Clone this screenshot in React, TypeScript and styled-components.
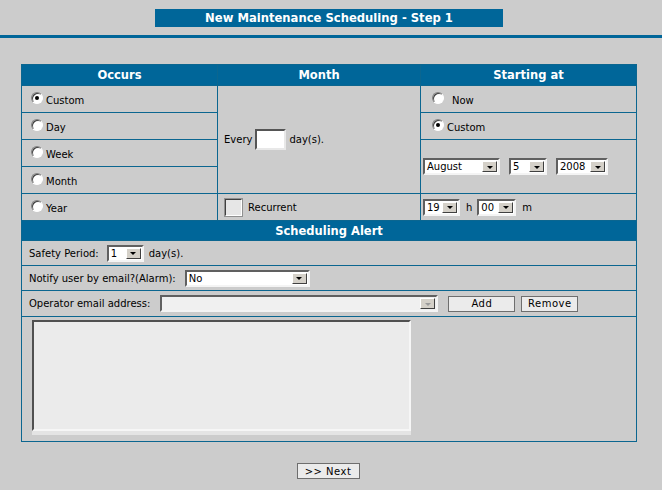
import styled, { createGlobalStyle } from "styled-components";

const GlobalStyle = createGlobalStyle`
    html, body {
        margin: 0;
        padding: 0;
        background: #cccccc;
        font-family: "DejaVu Sans", Verdana, sans-serif;
        font-size: 10px;
        color: #000;
    }
`

const BLUE = "#006699";
const LINE = "#0b6690";

interface SelectProps {
    width: number;
    value: string;
    disabled?: boolean;
}

function Select({ width, value, disabled }: SelectProps) {
    return (
        <SelectBox $w={width} $disabled={disabled}>
            <SelectValue>{value}</SelectValue>
            <ArrowButton>
                <Triangle $disabled={disabled} />
            </ArrowButton>
        </SelectBox>
    )
}

function Radio({ checked, label, gap }: { checked?: boolean; label: string; gap?: number }) {
    return (
        <RadioLabel $gap={gap ?? 3}>
            <RadioCircle>{checked && <RadioDot />}</RadioCircle>
            <span>{label}</span>
        </RadioLabel>
    )
}

const occurs = ["Custom", "Day", "Week", "Month", "Year"];

function App() {
    return (
        <>
            <GlobalStyle />
            <TitleWrap>
                <TitleBar>New Maintenance Scheduling - Step 1</TitleBar>
            </TitleWrap>
            <Rule />
            <FormTable>
                <colgroup>
                    <col style={{ width: 196 }} />
                    <col style={{ width: 203 }} />
                    <col style={{ width: 216 }} />
                </colgroup>
                <tbody>
                    <tr>
                        <HeadCell>Occurs</HeadCell>
                        <HeadCell>Month</HeadCell>
                        <HeadCell>Starting at</HeadCell>
                    </tr>
                    <tr>
                        <OptionCell><Radio checked label={occurs[0]} /></OptionCell>
                        <MonthCell rowSpan={4}>
                            <Inline $gap={3}>
                                <span>Every</span>
                                <DayInput />
                                <span>day(s).</span>
                            </Inline>
                        </MonthCell>
                        <StartCell><Radio label="Now" gap={8} /></StartCell>
                    </tr>
                    <tr>
                        <OptionCell><Radio label={occurs[1]} /></OptionCell>
                        <StartCell><Radio checked label="Custom" /></StartCell>
                    </tr>
                    <tr>
                        <OptionCell><Radio label={occurs[2]} /></OptionCell>
                        <DateCell rowSpan={2}>
                            <Inline $gap={9}>
                                <Select width={77} value="August" />
                                <Select width={38} value="5" />
                                <Select width={52} value="2008" />
                            </Inline>
                        </DateCell>
                    </tr>
                    <tr>
                        <OptionCell><Radio label={occurs[3]} /></OptionCell>
                    </tr>
                    <tr>
                        <OptionCell><Radio label={occurs[4]} /></OptionCell>
                        <MonthCell>
                            <Inline $gap={5}>
                                <CheckBox />
                                <span>Recurrent</span>
                            </Inline>
                        </MonthCell>
                        <DateCell>
                            <Inline $gap={0}>
                                <Select width={37} value="19" />
                                <TimeUnit>h</TimeUnit>
                                <Select width={39} value="00" />
                                <TimeUnit>m</TimeUnit>
                            </Inline>
                        </DateCell>
                    </tr>
                    <tr>
                        <SectionHead colSpan={3}>Scheduling Alert</SectionHead>
                    </tr>
                    <tr>
                        <AlertCell colSpan={3} $h={24}>
                            <Inline $gap={0}>
                                <span>Safety Period:</span>
                                <Spacer $w={8} />
                                <Select width={37} value="1" />
                                <Spacer $w={5} />
                                <span>day(s).</span>
                            </Inline>
                        </AlertCell>
                    </tr>
                    <tr>
                        <AlertCell colSpan={3} $h={24}>
                            <Inline $gap={9}>
                                <span>Notify user by email?(Alarm):</span>
                                <Select width={125} value="No" />
                            </Inline>
                        </AlertCell>
                    </tr>
                    <tr>
                        <AlertCell colSpan={3} $h={25}>
                            <Inline $gap={0}>
                                <span>Operator email address:</span>
                                <Spacer $w={10} />
                                <Select width={278} value="" disabled />
                                <Spacer $w={10} />
                                <FlatButton $w={67}>Add</FlatButton>
                                <Spacer $w={6} />
                                <FlatButton $w={57}>Remove</FlatButton>
                            </Inline>
                        </AlertCell>
                    </tr>
                    <tr>
                        <ListCell colSpan={3}>
                            <ListBox />
                        </ListCell>
                    </tr>
                </tbody>
            </FormTable>
            <Footer>
                <FlatButton $w={63}>&gt;&gt; Next</FlatButton>
            </Footer>
        </>
    )
}

export default App;

const TitleWrap = styled.div`
    display: flex;
    justify-content: center;
    padding: 9px 4px 0 0;
`

const TitleBar = styled.div`
    width: 348px;
    height: 18px;
    background: ${BLUE};
    color: #fff;
    font-weight: bold;
    font-size: 11.6px;
    line-height: 18px;
    text-align: center;
`

const Rule = styled.div`
    margin-top: 8px;
    height: 3px;
    background: ${BLUE};
`

const FormTable = styled.table`
    margin: 26px 0 0 21px;
    width: 615px;
    border-collapse: collapse;
    table-layout: fixed;
    border: 1px solid ${LINE};
    td {
        border: 1px solid ${LINE};
        padding: 0;
    }
`

const HeadCell = styled.td`
    background: ${BLUE};
    color: #fff;
    font-weight: bold;
    font-size: 11.5px;
    text-align: center;
    height: 20px;
`

const SectionHead = styled(HeadCell)`
    height: 19px;
`

const OptionCell = styled.td`
    height: 26px;
    padding-left: 9px !important;
`

const MonthCell = styled.td`
    padding-left: 6px !important;
`

const StartCell = styled.td`
    height: 26px;
    padding-left: 11px !important;
`

const DateCell = styled.td`
    padding-left: 2px !important;
`

const AlertCell = styled.td<{ $h: number }>`
    height: ${p => p.$h}px;
    padding-left: 7px !important;
`

const ListCell = styled.td`
    height: 121px;
    padding: 3px 0 0 10px !important;
    vertical-align: top;
`

const Inline = styled.div<{ $gap?: number }>`
    display: flex;
    align-items: center;
    gap: ${p => p.$gap ?? 3}px;
    white-space: nowrap;
`

const RadioLabel = styled.label<{ $gap: number }>`
    display: flex;
    align-items: center;
    gap: ${p => p.$gap}px;
    padding-top: 3px;
`

const RadioCircle = styled.span`
    width: 12px;
    height: 12px;
    margin-top: -6px;
    border-radius: 50%;
    background: #fff;
    box-sizing: border-box;
    border: 1px solid;
    border-color: #808080 #ffffff #ffffff #808080;
    box-shadow: inset 1px 1px 0 #404040;
    display: flex;
    align-items: center;
    justify-content: center;
`

const RadioDot = styled.span`
    width: 4px;
    height: 4px;
    border-radius: 50%;
    background: #000;
`

const DayInput = styled.span`
    display: inline-block;
    width: 27px;
    height: 17px;
    background: #fff;
    border: 2px solid;
    border-color: #555 #e8e8e8 #e8e8e8 #555;
`

const CheckBox = styled.span`
    display: inline-block;
    width: 15px;
    height: 15px;
    background: #e6e6e6;
    border: 2px solid;
    border-color: #404040 #ffffff #ffffff #404040;
    outline: 1px solid #909090;
    outline-offset: -1px;
`

const SelectBox = styled.div<{ $w: number; $disabled?: boolean }>`
    display: inline-flex;
    align-items: stretch;
    width: ${p => p.$w}px;
    height: 17px;
    box-sizing: border-box;
    background: ${p => p.$disabled ? "#f0f0f0" : "#fff"};
    border: 2px solid;
    border-color: #606060 #f4f4f4 #f4f4f4 #606060;
`

const SelectValue = styled.span`
    flex: 1;
    padding-left: 2px;
    line-height: 13px;
    overflow: hidden;
`

const ArrowButton = styled.span`
    width: 15px;
    margin: 1px 1px 1px 0;
    box-sizing: border-box;
    background: #d4d0c8;
    border: 1px solid;
    border-color: #ffffff #404040 #404040 #ffffff;
    display: flex;
    align-items: center;
    justify-content: center;
`

const Triangle = styled.span<{ $disabled?: boolean }>`
    width: 0;
    height: 0;
    border-left: 3px solid transparent;
    border-right: 3px solid transparent;
    border-top: 3px solid ${p => p.$disabled ? "#9a9a9a" : "#000"};
    margin-top: 1px;
`

const TimeUnit = styled.span`
    padding: 0 5px 0 6px;
`

const Spacer = styled.span<{ $w: number }>`
    width: ${p => p.$w}px;
`

const FlatButton = styled.button<{ $w: number }>`
    width: ${p => p.$w}px;
    height: 16px;
    padding: 0;
    background: #ebebeb;
    border: 1px solid #6e6e6e;
    font-family: "DejaVu Sans", Verdana, sans-serif;
    font-size: 10px;
    letter-spacing: 0.5px;
    color: #000;
`

const ListBox = styled.div`
    width: 379px;
    height: 111px;
    box-sizing: border-box;
    background: #ebebeb;
    border: 2px solid;
    border-color: #505050 #f6f6f6 #f6f6f6 #505050;
    box-shadow: 0 4px 0 #e4e4e4;
`

const Footer = styled.div`
    display: flex;
    justify-content: center;
    padding: 21px 6px 0 0;
`
